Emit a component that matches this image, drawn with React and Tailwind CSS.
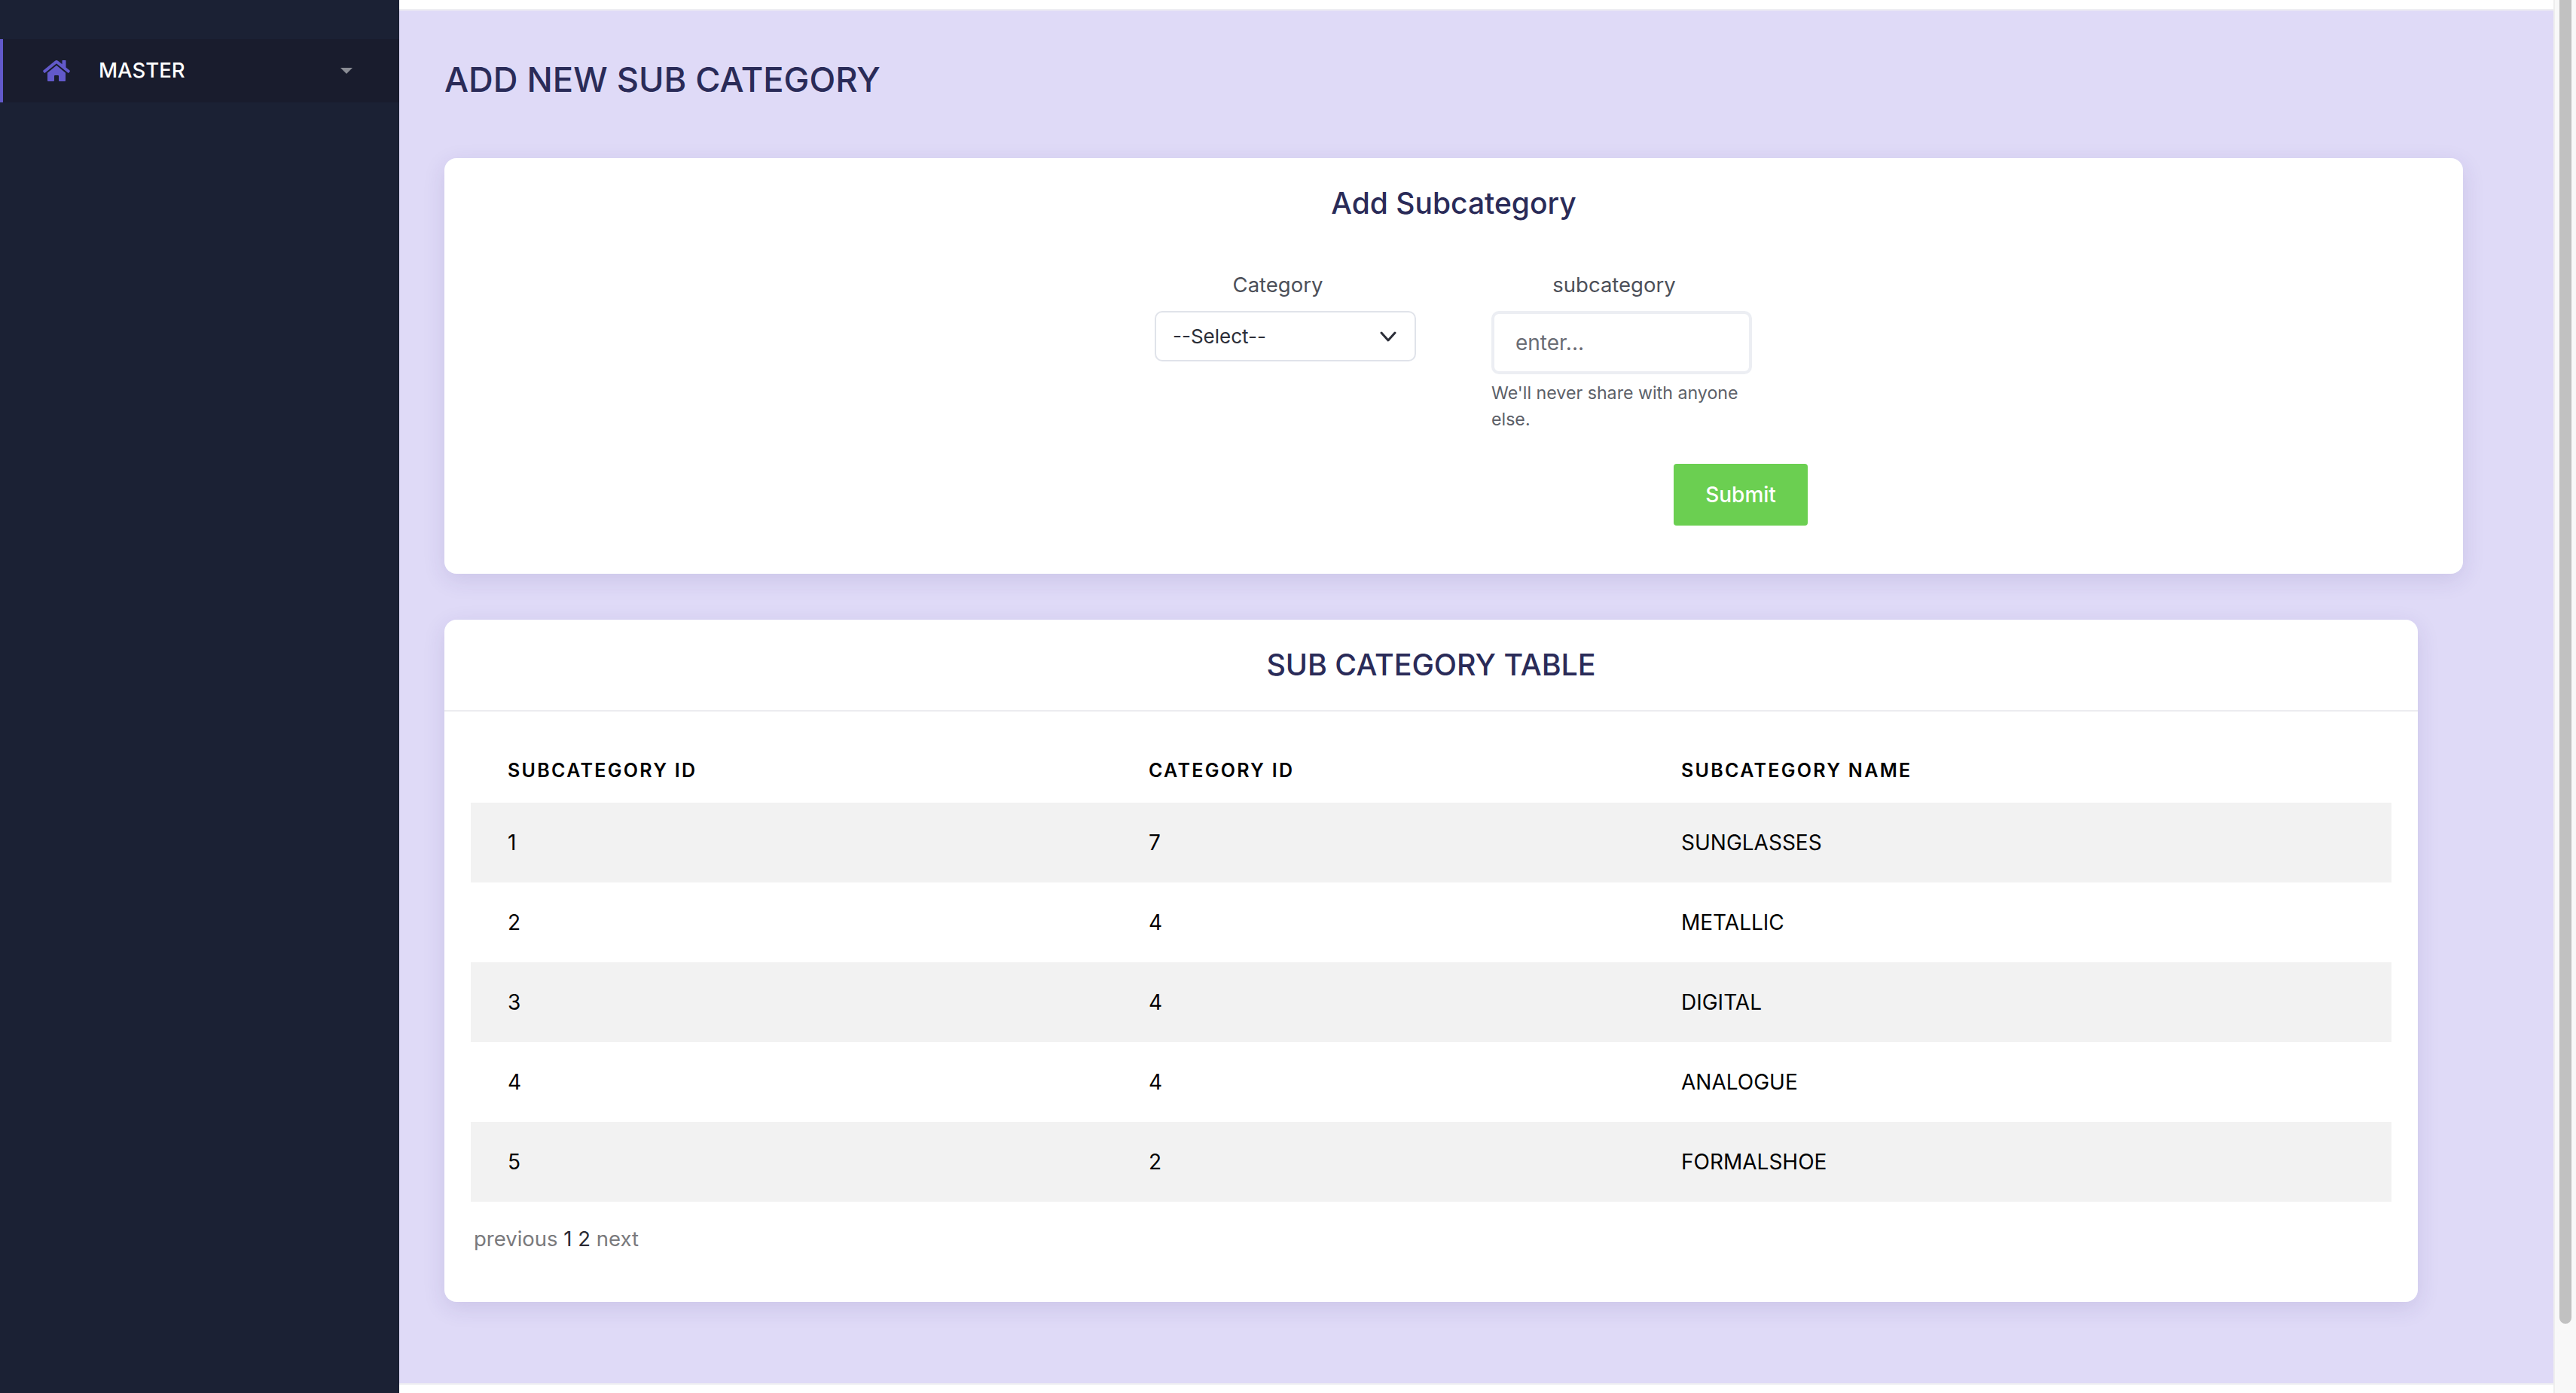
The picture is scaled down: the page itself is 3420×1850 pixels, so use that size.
import { FaHome } from "react-icons/fa";

const rows = [
  ["1", "7", "SUNGLASSES"],
  ["2", "4", "METALLIC"],
  ["3", "4", "DIGITAL"],
  ["4", "4", "ANALOGUE"],
  ["5", "2", "FORMALSHOE"],
];
const cardShadow = "shadow-[0_8px_30px_rgba(60,40,120,0.12)]";

export default function App() {
  return (
    <div className="flex h-screen w-full overflow-hidden bg-white font-['Inter',sans-serif]">
      <aside className="w-[530px] shrink-0 bg-[#1b2134] pt-[52px]">
        <div className="flex h-[84px] items-center border-l-4 border-[#6259ca] bg-[#191c2d] pl-[53px] pr-[62px]">
          <FaHome className="h-[32px] w-[36px] text-[#6259ca]" />
          <span className="ml-[38px] text-[27.5px] font-medium text-white">MASTER</span>
          <span className="ml-auto h-0 w-0 border-x-[8px] border-t-[8px] border-x-transparent border-t-[#8a8c94]" />
        </div>
      </aside>

      <div className="flex w-[2860px] shrink-0 flex-col">
        <div className="h-[14px] shrink-0 border-b-2 border-[#eeeef2] bg-white" />
        <main className="h-[1823px] shrink-0 bg-[#dfdaf7] px-[60px]">
          <h1 className="flex h-[196px] items-center pb-[12px] text-[45.3px] font-[550] text-[#2a2b58]">ADD NEW SUB CATEGORY</h1>

          <section className={`h-[552px] w-[2680px] rounded-[16px] bg-white ${cardShadow}`}>
            <h2 className="pt-[36px] text-center text-[39px] font-[550] leading-[48px] text-[#2a2b58]">Add Subcategory</h2>
            <div className="ml-[943px] mt-[56px] w-[867px]">
              <div className="flex gap-[100px]">
                <div className="w-[347px]">
                  <label className="block h-[63px] pr-[20px] text-center text-[27.5px] leading-[56px] text-[#4d5059]">Category</label>
                  <div className="flex h-[67px] items-center justify-between rounded-[10px] border-2 border-[#e0e3ea] pl-[22px] pr-[24px] text-[26px] text-[#2b2e38]">
                    <span>--Select--</span>
                    <svg width="22" height="14" viewBox="0 0 22 14" fill="none" stroke="#2b2e38" strokeWidth="3" strokeLinecap="round" strokeLinejoin="round">
                      <path d="M2 2l9 10 9-10" />
                    </svg>
                  </div>
                </div>
                <div className="w-[346px]">
                  <label className="block h-[63px] pr-[20px] text-center text-[27.5px] leading-[56px] text-[#4d5059]">subcategory</label>
                  <input
                    readOnly
                    placeholder="enter..."
                    className="block h-[84px] w-full rounded-[10px] border-4 border-[#eceef3] bg-white pl-[28px] text-[28px] text-[#6a6d75] placeholder:text-[#6a6d75] outline-none"
                  />
                  <p className="mt-[8px] text-[23.2px] leading-[35px] text-[#5c5f68]">We'll never share with anyone else.</p>
                </div>
              </div>
              <div className="mt-[41px] flex justify-end">
                <button className="h-[82px] w-[178px] rounded-[4px] bg-[#6bcf51] text-[28px] font-medium text-white">Submit</button>
              </div>
            </div>
          </section>

          <section className={`mt-[61px] h-[906px] w-[2620px] rounded-[16px] bg-white ${cardShadow}`}>
            <h2 className="flex h-[122px] items-center justify-center border-b-2 border-[#ececf0] pt-[2px] text-[39.4px] font-[550] text-[#2a2b58]">SUB CATEGORY TABLE</h2>
            <div className="px-[35px] pt-[31px]">
              <table className="w-[2550px] table-fixed border-collapse text-left text-black">
                <colgroup>
                  <col className="w-[851px]" />
                  <col className="w-[707px]" />
                  <col className="w-[992px]" />
                </colgroup>
                <thead>
                  <tr className="h-[90px] text-[25px] font-semibold tracking-[2.3px]">
                    <th className="pl-[49px] pt-[6px] font-semibold">SUBCATEGORY ID</th>
                    <th className="pl-[49px] pt-[6px] font-semibold">CATEGORY ID</th>
                    <th className="pl-[49px] pt-[6px] font-semibold">SUBCATEGORY NAME</th>
                  </tr>
                </thead>
                <tbody>
                  {rows.map((r, i) => (
                    <tr key={r[0]} className={`h-[106px] text-[28px] ${i % 2 === 0 ? "bg-[#f2f2f2]" : "bg-white"}`}>
                      {r.map((c, j) => (
                        <td key={j} className="pl-[49px]">{c}</td>
                      ))}
                    </tr>
                  ))}
                </tbody>
              </table>
              <div className="pl-[4px] pt-[32px] text-[27.5px] leading-[34px] text-[#7a7a7d]">
                previous <span className="text-[#2b2b33]">1 2</span> next
              </div>
            </div>
          </section>
        </main>
        <div className="flex-1 border-t-2 border-[#eeeef2] bg-white" />
      </div>

      <div className="w-[30px] shrink-0 border-l-2 border-[#eeeeee] bg-[#f8f8f8] pl-[6px]">
        <div className="h-[1758px] w-[16px] rounded-b-full bg-[#c1c1c1]" />
      </div>
    </div>
  );
}
